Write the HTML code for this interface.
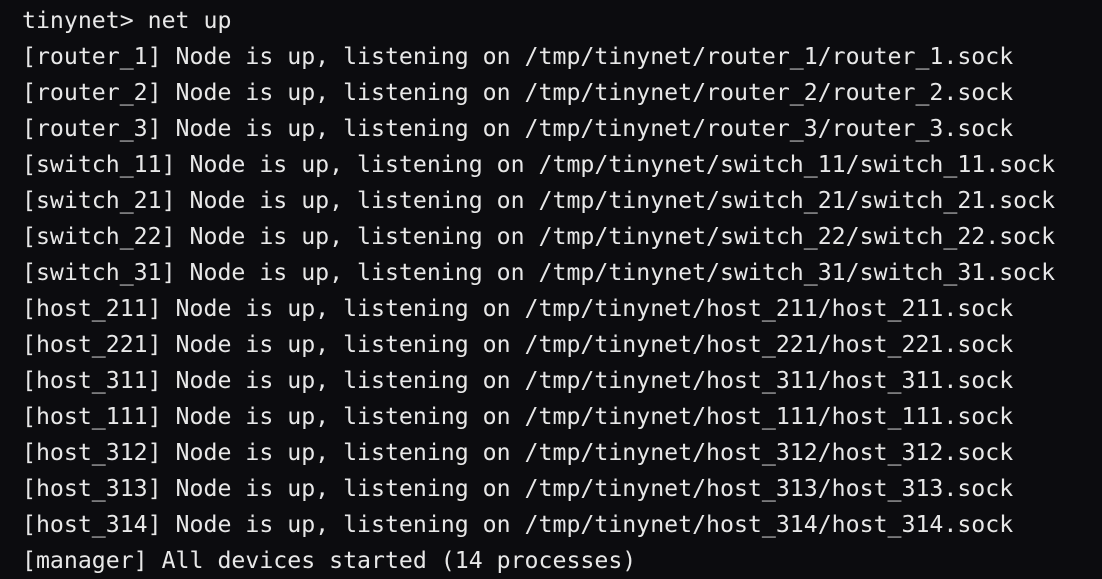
<!DOCTYPE html>
<html><head><meta charset="utf-8"><style>
html,body{margin:0;padding:0;background:#0c0c0f;width:1102px;height:577px;overflow:hidden}
pre{margin:0;position:absolute;left:22px;top:3px;font-family:"DejaVu Sans Mono","Liberation Mono",monospace;font-size:23.2px;line-height:36px;color:#e8e8e8;white-space:pre}
</style></head><body><pre>tinynet&gt; net up
[router_1] Node is up, listening on /tmp/tinynet/router_1/router_1.sock
[router_2] Node is up, listening on /tmp/tinynet/router_2/router_2.sock
[router_3] Node is up, listening on /tmp/tinynet/router_3/router_3.sock
[switch_11] Node is up, listening on /tmp/tinynet/switch_11/switch_11.sock
[switch_21] Node is up, listening on /tmp/tinynet/switch_21/switch_21.sock
[switch_22] Node is up, listening on /tmp/tinynet/switch_22/switch_22.sock
[switch_31] Node is up, listening on /tmp/tinynet/switch_31/switch_31.sock
[host_211] Node is up, listening on /tmp/tinynet/host_211/host_211.sock
[host_221] Node is up, listening on /tmp/tinynet/host_221/host_221.sock
[host_311] Node is up, listening on /tmp/tinynet/host_311/host_311.sock
[host_111] Node is up, listening on /tmp/tinynet/host_111/host_111.sock
[host_312] Node is up, listening on /tmp/tinynet/host_312/host_312.sock
[host_313] Node is up, listening on /tmp/tinynet/host_313/host_313.sock
[host_314] Node is up, listening on /tmp/tinynet/host_314/host_314.sock
[manager] All devices started (14 processes)</pre></body></html>
